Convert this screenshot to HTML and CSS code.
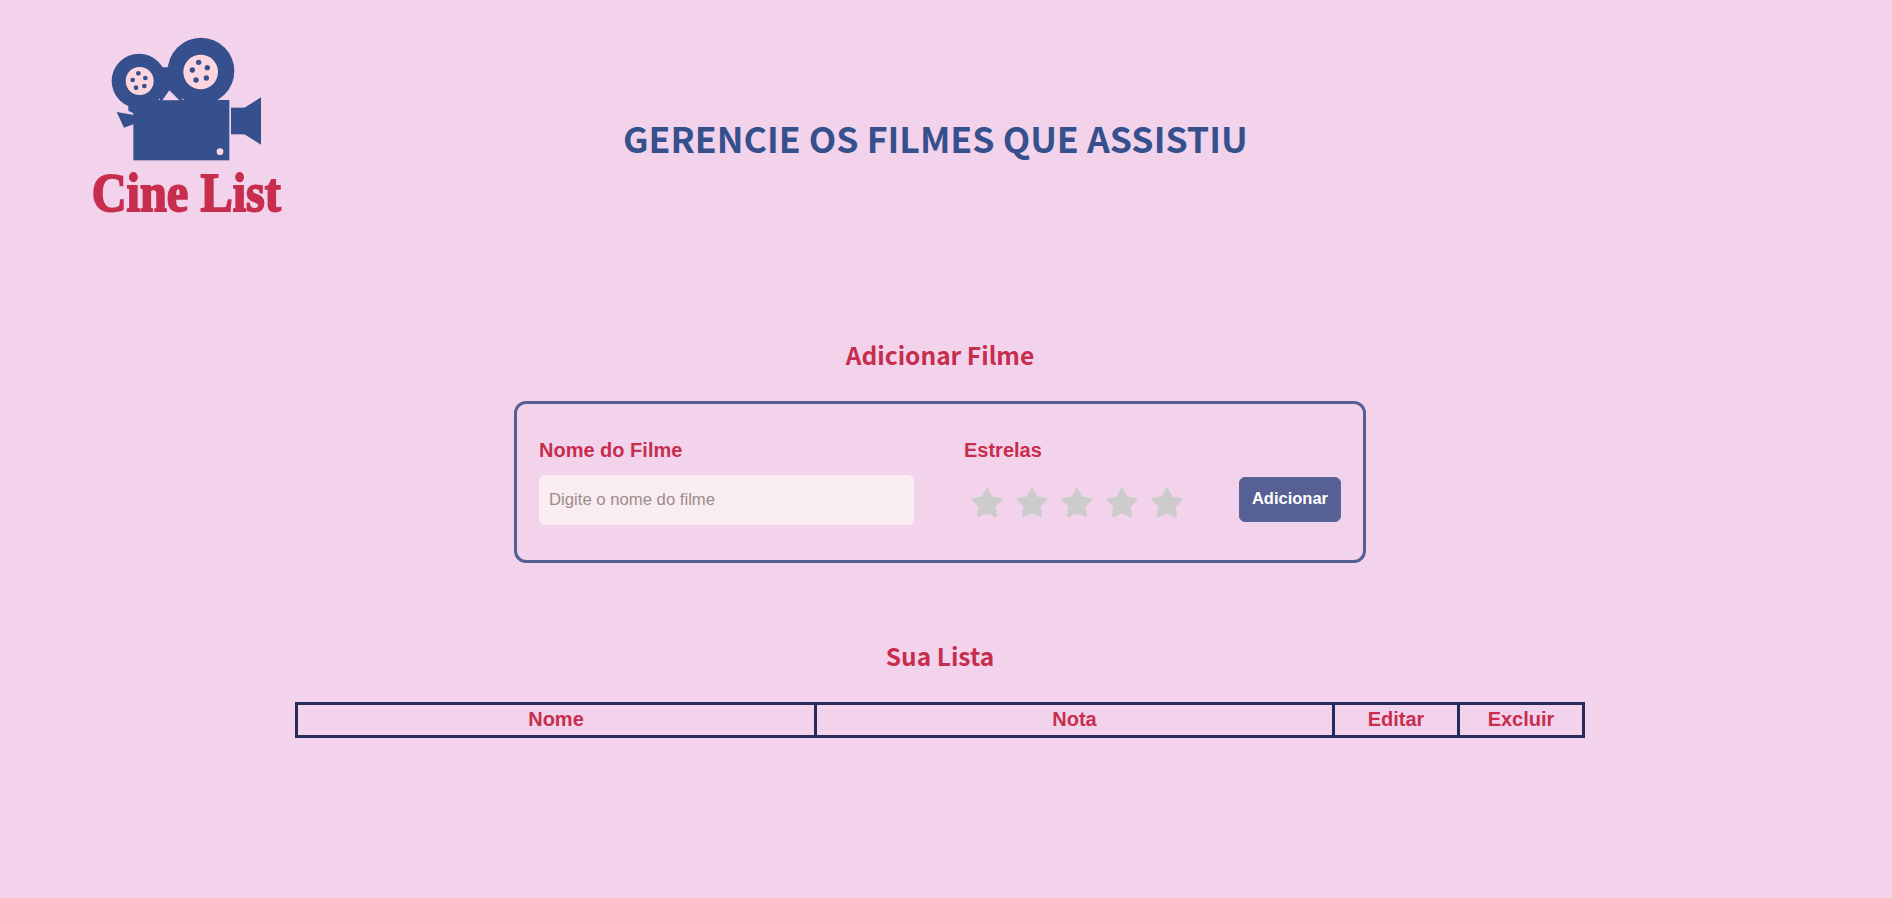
FILE: index.html
```html
<!DOCTYPE html>
<html lang="pt-BR">
<head>
<meta charset="utf-8">
<title>Cine List</title>
<link rel="stylesheet" href="styles.css">
</head>
<body>
<div class="page">
  <header class="topbar">
    <svg class="logo" viewBox="0 0 720 630" xmlns="http://www.w3.org/2000/svg" role="img" aria-label="Cine List">
      <g fill="#35508c">
        <circle cx="393" cy="153" r="100"/>
        <circle cx="207" cy="183" r="82"/>
        <polygon points="270,142 310,142 340,250 270,250"/>
        <polygon points="175,250 200,250 200,285 175,272"/>
        <rect x="190" y="240" width="288" height="181"/>
        <polygon points="140,276 192,285 192,312 162,323"/>
        <rect x="483" y="263" width="42" height="80"/>
        <polygon points="523,263 573,232 573,374 523,343"/>
      </g>
      <polygon points="277,241 298,211 328,241" fill="#f3d3ec"/>
      <g fill="#fdd5df">
        <circle cx="392" cy="156" r="52"/>
        <circle cx="209" cy="183" r="42"/>
        <circle cx="450" cy="395" r="10"/>
      </g>
      <g fill="#35508c">
        <circle cx="386" cy="127" r="8"/>
        <circle cx="367" cy="150" r="8"/>
        <circle cx="412" cy="143" r="8"/>
        <circle cx="378" cy="180" r="8"/>
        <circle cx="409" cy="174" r="8"/>
        <circle cx="205" cy="160" r="7"/>
        <circle cx="188" cy="180" r="7"/>
        <circle cx="226" cy="174" r="7"/>
        <circle cx="198" cy="203" r="7"/>
        <circle cx="223" cy="198" r="7"/>
      </g>
      <text class="logo-text" transform="translate(65 574) scale(1 1.15)">Cine List</text>
    </svg>
    <h1 class="page-title">GERENCIE OS FILMES QUE ASSISTIU</h1>
  </header>

  <main class="content">
    <h2 class="section-title">Adicionar Filme</h2>
    <form class="movie-form">
      <div class="field field-name">
        <label class="field-label" for="nome">Nome do Filme</label>
        <input class="text-input" id="nome" type="text" placeholder="Digite o nome do filme">
      </div>
      <div class="field field-stars">
        <span class="field-label">Estrelas</span>
        <div class="stars">
          <svg class="star" viewBox="0 0 32 32"><path d="M16 2.5 L20.4 11 L29.8 12.5 L23.1 19.3 L24.5 28.7 L16 24.5 L7.5 28.7 L8.9 19.3 L2.2 12.5 L11.6 11 Z"/></svg>
          <svg class="star" viewBox="0 0 32 32"><path d="M16 2.5 L20.4 11 L29.8 12.5 L23.1 19.3 L24.5 28.7 L16 24.5 L7.5 28.7 L8.9 19.3 L2.2 12.5 L11.6 11 Z"/></svg>
          <svg class="star" viewBox="0 0 32 32"><path d="M16 2.5 L20.4 11 L29.8 12.5 L23.1 19.3 L24.5 28.7 L16 24.5 L7.5 28.7 L8.9 19.3 L2.2 12.5 L11.6 11 Z"/></svg>
          <svg class="star" viewBox="0 0 32 32"><path d="M16 2.5 L20.4 11 L29.8 12.5 L23.1 19.3 L24.5 28.7 L16 24.5 L7.5 28.7 L8.9 19.3 L2.2 12.5 L11.6 11 Z"/></svg>
          <svg class="star" viewBox="0 0 32 32"><path d="M16 2.5 L20.4 11 L29.8 12.5 L23.1 19.3 L24.5 28.7 L16 24.5 L7.5 28.7 L8.9 19.3 L2.2 12.5 L11.6 11 Z"/></svg>
        </div>
      </div>
      <button class="add-button" type="button">Adicionar</button>
    </form>

    <h2 class="section-title list-title">Sua Lista</h2>
    <table class="movie-table">
      <thead>
        <tr>
          <th class="col-name">Nome</th>
          <th class="col-rating">Nota</th>
          <th class="col-edit">Editar</th>
          <th class="col-delete">Excluir</th>
        </tr>
      </thead>
    </table>
  </main>
</div>
</body>
</html>
```

FILE: styles.css
```css
* { box-sizing: border-box; }

html, body { height: 100%; }

body {
  margin: 0;
  background: #f3d3ec;
  font-family: "Liberation Sans", Arial, sans-serif;
  overflow: hidden;
}

.page {
  width: 1880px;
}

.topbar {
  display: flex;
  align-items: center;
  padding: 20px 0 0 70px;
}

.logo {
  display: block;
  width: 240px;
  height: 210px;
  flex: none;
}

.logo-text {
  font-family: "Liberation Serif", serif;
  font-weight: 700;
  font-size: 145px;
  fill: #c72e4e;
  stroke: #c72e4e;
  stroke-width: 5px;
}

.page-title {
  margin: 27px 0 0 313px;
  font-family: "Noto Sans CJK SC", "Noto Sans", sans-serif;
  font-weight: 700;
  font-size: 35.7px;
  line-height: 1.2;
  color: #35508c;
}

.content {
  display: flex;
  flex-direction: column;
  align-items: center;
  padding-top: 105px;
}

.section-title {
  margin: 0;
  font-family: "Noto Sans CJK SC", "Noto Sans", sans-serif;
  font-weight: 700;
  font-size: 24.5px;
  line-height: 40px;
  color: #c72e4e;
}

.list-title {
  margin-top: 73px;
}

.movie-form {
  display: flex;
  align-items: flex-start;
  width: 852px;
  height: 162px;
  margin-top: 26px;
  padding: 35px 22px 0;
  border: 3px solid #566095;
  border-radius: 12px;
}

.field {
  display: flex;
  flex-direction: column;
}

.field-name {
  width: 375px;
  margin-right: 50px;
}

.field-stars {
  flex: 1;
}

.field-label {
  font-size: 20px;
  font-weight: 700;
  line-height: 23px;
  color: #c72e4e;
}

.text-input {
  width: 375px;
  height: 50px;
  margin-top: 13px;
  padding: 0 10px;
  border: 0;
  border-radius: 6px;
  background: #f9edf2;
  font-family: "Liberation Sans", Arial, sans-serif;
  font-size: 16.7px;
}

.text-input::placeholder {
  color: #9c8c8c;
  opacity: 1;
}

.stars {
  display: flex;
  gap: 13px;
  margin: 25px 0 0 7px;
}

.star {
  display: block;
  width: 32px;
  height: 32px;
}

.star path {
  fill: #cccccc;
  stroke: #cccccc;
  stroke-width: 3;
  stroke-linejoin: round;
}

.add-button {
  flex: none;
  width: 102px;
  height: 45px;
  margin-top: 38px;
  border: 1px solid #5b6598;
  border-radius: 6px;
  background: #566095;
  color: #ffffff;
  font-family: "Liberation Sans", Arial, sans-serif;
  font-size: 16.5px;
  font-weight: 700;
  padding: 0 0 2px;
}

.movie-table {
  width: 1290px;
  margin-top: 26px;
  border-collapse: collapse;
  border: 3px solid #252c5c;
  table-layout: fixed;
}

.movie-table th {
  height: 33px;
  padding: 0 0 2px;
  border: 3px solid #252c5c;
  font-size: 20px;
  font-weight: 700;
  color: #c72e4e;
  text-align: center;
}

.col-name { width: 519px; }
.col-rating { width: 518px; }
.col-edit { width: 125px; }
.col-delete { width: 125px; }
```
